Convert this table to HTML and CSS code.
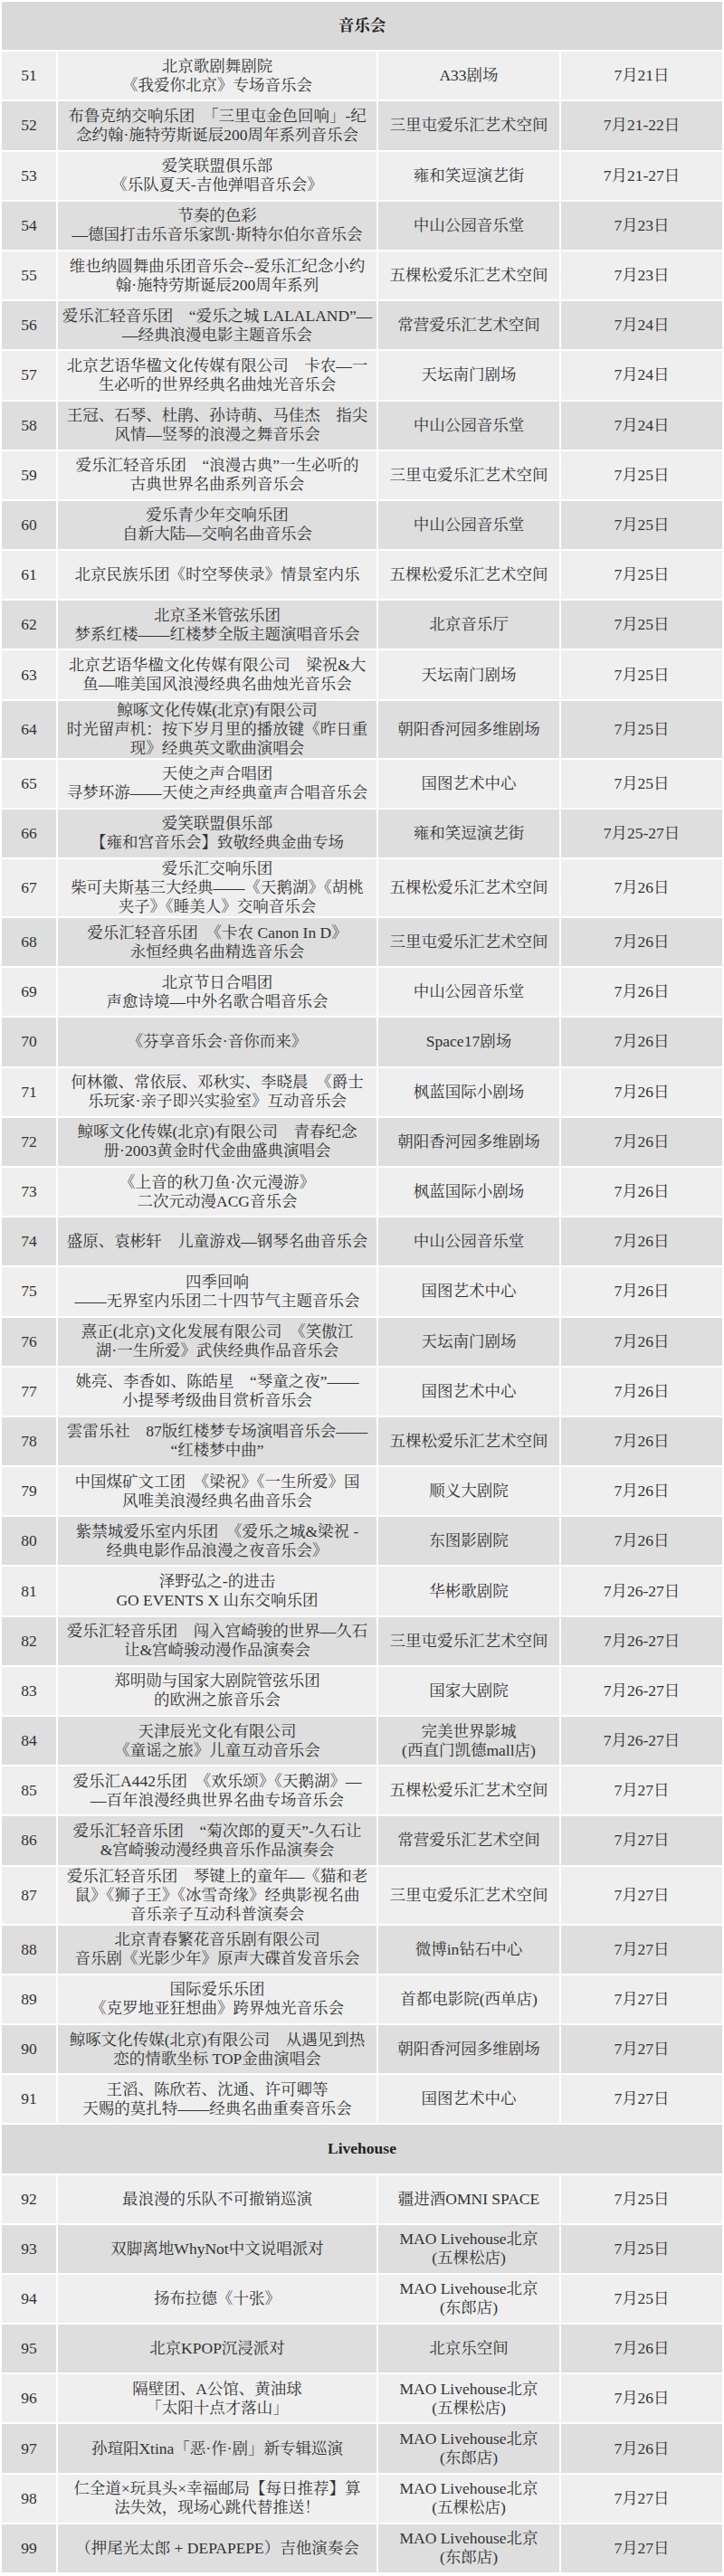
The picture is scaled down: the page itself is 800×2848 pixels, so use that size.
FILE: index.html
```html
<!DOCTYPE html>
<html lang="zh-CN">
<head>
<meta charset="utf-8">
<title>演出排期</title>
<link rel="stylesheet" href="styles.css">
</head>
<body>
<table class="schedule">
<colgroup><col class="c-num"><col class="c-event"><col class="c-venue"><col class="c-date"></colgroup>
<tbody>
<tr class="section"><td colspan="4">音乐会</td></tr>
<tr class="odd"><td>51</td><td>北京歌剧舞剧院<br>《我爱你北京》专场音乐会</td><td>A33剧场</td><td>7月21日</td></tr>
<tr class="even"><td>52</td><td>布鲁克纳交响乐团　「三里屯金色回响」-纪<br>念约翰·施特劳斯诞辰200周年系列音乐会</td><td>三里屯爱乐汇艺术空间</td><td>7月21-22日</td></tr>
<tr class="odd"><td>53</td><td>爱笑联盟俱乐部<br>《乐队夏天-吉他弹唱音乐会》</td><td>雍和笑逗演艺街</td><td>7月21-27日</td></tr>
<tr class="even"><td>54</td><td>节奏的色彩<br>—德国打击乐音乐家凯·斯特尔伯尔音乐会</td><td>中山公园音乐堂</td><td>7月23日</td></tr>
<tr class="odd"><td>55</td><td>维也纳圆舞曲乐团音乐会--爱乐汇纪念小约<br>翰·施特劳斯诞辰200周年系列</td><td>五棵松爱乐汇艺术空间</td><td>7月23日</td></tr>
<tr class="even"><td>56</td><td>爱乐汇轻音乐团　“爱乐之城 LALALAND”—<br>—经典浪漫电影主题音乐会</td><td>常营爱乐汇艺术空间</td><td>7月24日</td></tr>
<tr class="odd"><td>57</td><td>北京艺语华楹文化传媒有限公司　卡农—一<br>生必听的世界经典名曲烛光音乐会</td><td>天坛南门剧场</td><td>7月24日</td></tr>
<tr class="even"><td>58</td><td>王冠、石琴、杜鹃、孙诗萌、马佳杰　指尖<br>风情—竖琴的浪漫之舞音乐会</td><td>中山公园音乐堂</td><td>7月24日</td></tr>
<tr class="odd"><td>59</td><td>爱乐汇轻音乐团　“浪漫古典”一生必听的<br>古典世界名曲系列音乐会</td><td>三里屯爱乐汇艺术空间</td><td>7月25日</td></tr>
<tr class="even"><td>60</td><td>爱乐青少年交响乐团<br>自新大陆—交响名曲音乐会</td><td>中山公园音乐堂</td><td>7月25日</td></tr>
<tr class="odd"><td>61</td><td>北京民族乐团《时空琴侠录》情景室内乐</td><td>五棵松爱乐汇艺术空间</td><td>7月25日</td></tr>
<tr class="even"><td>62</td><td>北京圣米管弦乐团<br>梦系红楼——红楼梦全版主题演唱音乐会</td><td>北京音乐厅</td><td>7月25日</td></tr>
<tr class="odd"><td>63</td><td>北京艺语华楹文化传媒有限公司　梁祝&amp;大<br>鱼—唯美国风浪漫经典名曲烛光音乐会</td><td>天坛南门剧场</td><td>7月25日</td></tr>
<tr class="even tall"><td>64</td><td>鲸啄文化传媒(北京)有限公司<br>时光留声机：按下岁月里的播放键《昨日重<br>现》经典英文歌曲演唱会</td><td>朝阳香河园多维剧场</td><td>7月25日</td></tr>
<tr class="odd"><td>65</td><td>天使之声合唱团<br>寻梦环游——天使之声经典童声合唱音乐会</td><td>国图艺术中心</td><td>7月25日</td></tr>
<tr class="even"><td>66</td><td>爱笑联盟俱乐部<br>【雍和宫音乐会】致敬经典金曲专场</td><td>雍和笑逗演艺街</td><td>7月25-27日</td></tr>
<tr class="odd tall"><td>67</td><td>爱乐汇交响乐团<br>柴可夫斯基三大经典——《天鹅湖》《胡桃<br>夹子》《睡美人》交响音乐会</td><td>五棵松爱乐汇艺术空间</td><td>7月26日</td></tr>
<tr class="even"><td>68</td><td>爱乐汇轻音乐团　《卡农 Canon In D》<br>永恒经典名曲精选音乐会</td><td>三里屯爱乐汇艺术空间</td><td>7月26日</td></tr>
<tr class="odd"><td>69</td><td>北京节日合唱团<br>声愈诗境—中外名歌合唱音乐会</td><td>中山公园音乐堂</td><td>7月26日</td></tr>
<tr class="even"><td>70</td><td>《芬享音乐会·音你而来》</td><td>Space17剧场</td><td>7月26日</td></tr>
<tr class="odd"><td>71</td><td>何林徽、常依辰、邓秋实、李晓晨　《爵士<br>乐玩家·亲子即兴实验室》互动音乐会</td><td>枫蓝国际小剧场</td><td>7月26日</td></tr>
<tr class="even"><td>72</td><td>鲸啄文化传媒(北京)有限公司　青春纪念<br>册·2003黄金时代金曲盛典演唱会</td><td>朝阳香河园多维剧场</td><td>7月26日</td></tr>
<tr class="odd"><td>73</td><td>《上音的秋刀鱼·次元漫游》<br>二次元动漫ACG音乐会</td><td>枫蓝国际小剧场</td><td>7月26日</td></tr>
<tr class="even"><td>74</td><td>盛原、袁彬轩　儿童游戏—钢琴名曲音乐会</td><td>中山公园音乐堂</td><td>7月26日</td></tr>
<tr class="odd"><td>75</td><td>四季回响<br>——无界室内乐团二十四节气主题音乐会</td><td>国图艺术中心</td><td>7月26日</td></tr>
<tr class="even"><td>76</td><td>熹正(北京)文化发展有限公司　《笑傲江<br>湖·一生所爱》武侠经典作品音乐会</td><td>天坛南门剧场</td><td>7月26日</td></tr>
<tr class="odd"><td>77</td><td>姚亮、李香如、陈皓星　“琴童之夜”——<br>小提琴考级曲目赏析音乐会</td><td>国图艺术中心</td><td>7月26日</td></tr>
<tr class="even"><td>78</td><td>雲雷乐社　87版红楼梦专场演唱音乐会——<br>“红楼梦中曲”</td><td>五棵松爱乐汇艺术空间</td><td>7月26日</td></tr>
<tr class="odd"><td>79</td><td>中国煤矿文工团　《梁祝》《一生所爱》国<br>风唯美浪漫经典名曲音乐会</td><td>顺义大剧院</td><td>7月26日</td></tr>
<tr class="even"><td>80</td><td>紫禁城爱乐室内乐团　《爱乐之城&amp;梁祝 -<br>经典电影作品浪漫之夜音乐会》</td><td>东图影剧院</td><td>7月26日</td></tr>
<tr class="odd"><td>81</td><td>泽野弘之-的进击<br>GO EVENTS X 山东交响乐团</td><td>华彬歌剧院</td><td>7月26-27日</td></tr>
<tr class="even"><td>82</td><td>爱乐汇轻音乐团　闯入宫崎骏的世界—久石<br>让&amp;宫崎骏动漫作品演奏会</td><td>三里屯爱乐汇艺术空间</td><td>7月26-27日</td></tr>
<tr class="odd"><td>83</td><td>郑明勋与国家大剧院管弦乐团<br>的欧洲之旅音乐会</td><td>国家大剧院</td><td>7月26-27日</td></tr>
<tr class="even"><td>84</td><td>天津辰光文化有限公司<br>《童谣之旅》儿童互动音乐会</td><td>完美世界影城<br>(西直门凯德mall店)</td><td>7月26-27日</td></tr>
<tr class="odd"><td>85</td><td>爱乐汇A442乐团　《欢乐颂》《天鹅湖》—<br>—百年浪漫经典世界名曲专场音乐会</td><td>五棵松爱乐汇艺术空间</td><td>7月27日</td></tr>
<tr class="even"><td>86</td><td>爱乐汇轻音乐团　“菊次郎的夏天”-久石让<br>&amp;宫崎骏动漫经典音乐作品演奏会</td><td>常营爱乐汇艺术空间</td><td>7月27日</td></tr>
<tr class="odd tall"><td>87</td><td>爱乐汇轻音乐团　琴键上的童年—《猫和老<br>鼠》《狮子王》《冰雪奇缘》经典影视名曲<br>音乐亲子互动科普演奏会</td><td>三里屯爱乐汇艺术空间</td><td>7月27日</td></tr>
<tr class="even"><td>88</td><td>北京青春繁花音乐剧有限公司<br>音乐剧《光影少年》原声大碟首发音乐会</td><td>微博in钻石中心</td><td>7月27日</td></tr>
<tr class="odd"><td>89</td><td>国际爱乐乐团<br>《克罗地亚狂想曲》跨界烛光音乐会</td><td>首都电影院(西单店)</td><td>7月27日</td></tr>
<tr class="even"><td>90</td><td>鲸啄文化传媒(北京)有限公司　从遇见到热<br>恋的情歌坐标 TOP金曲演唱会</td><td>朝阳香河园多维剧场</td><td>7月27日</td></tr>
<tr class="odd"><td>91</td><td>王滔、陈欣若、沈通、许可卿等<br>天赐的莫扎特——经典名曲重奏音乐会</td><td>国图艺术中心</td><td>7月27日</td></tr>
<tr class="section"><td colspan="4">Livehouse</td></tr>
<tr class="odd"><td>92</td><td>最浪漫的乐队不可撤销巡演</td><td>疆进酒OMNI SPACE</td><td>7月25日</td></tr>
<tr class="even"><td>93</td><td>双脚离地WhyNot中文说唱派对</td><td>MAO Livehouse北京<br>(五棵松店)</td><td>7月25日</td></tr>
<tr class="odd"><td>94</td><td>扬布拉德《十张》</td><td>MAO Livehouse北京<br>(东郎店)</td><td>7月25日</td></tr>
<tr class="even"><td>95</td><td>北京KPOP沉浸派对</td><td>北京乐空间</td><td>7月26日</td></tr>
<tr class="odd"><td>96</td><td>隔壁团、A公馆、黄油球<br>「太阳十点才落山」</td><td>MAO Livehouse北京<br>(五棵松店)</td><td>7月26日</td></tr>
<tr class="even"><td>97</td><td>孙瑄阳Xtina「恶·作·剧」新专辑巡演</td><td>MAO Livehouse北京<br>(东郎店)</td><td>7月26日</td></tr>
<tr class="odd"><td>98</td><td>仁全道×玩具头×幸福邮局【每日推荐】算<br>法失效，现场心跳代替推送！</td><td>MAO Livehouse北京<br>(五棵松店)</td><td>7月27日</td></tr>
<tr class="even"><td>99</td><td>（押尾光太郎 + DEPAPEPE）吉他演奏会</td><td>MAO Livehouse北京<br>(东郎店)</td><td>7月27日</td></tr>
</tbody>
</table>
</body>
</html>
```

FILE: styles.css
```css
html, body {
  margin: 0;
  padding: 0;
  background: #ffffff;
}

.schedule {
  width: 800px;
  table-layout: fixed;
  border-collapse: separate;
  border-spacing: 2px;
  font-family: "Liberation Serif", "Noto Serif CJK SC", "Noto Sans CJK SC", serif;
  font-size: 17.5px;
  line-height: 21px;
  color: #333333;
}

.c-num { width: 60px; }
.c-event { width: 352px; }
.c-venue { width: 200px; }
.c-date { width: 178px; }

.schedule td {
  height: 53.2px;
  padding: 0 1px;
  text-align: center;
  vertical-align: middle;
  white-space: nowrap;
  overflow: visible;
}

.schedule tr.tall td {
  height: 63px;
}

.schedule tr.odd td {
  background: #efefef;
}

.schedule tr.even td {
  background: #dedede;
}

.schedule tr.section td {
  background: #d9d9d9;
  font-size: 17.5px;
  font-weight: bold;
  color: #222222;
}
```
